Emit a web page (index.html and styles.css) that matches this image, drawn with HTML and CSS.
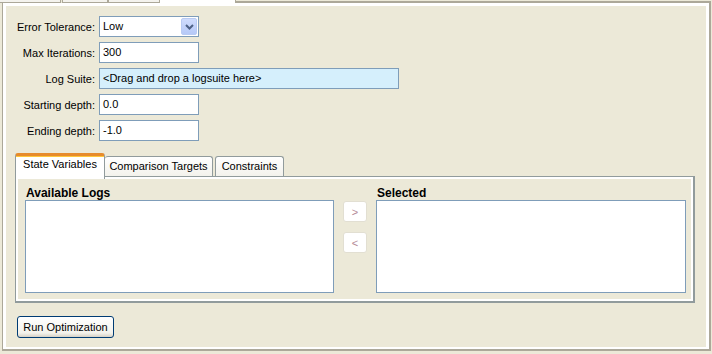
FILE: index.html
```html
<!DOCTYPE html>
<html lang="en">
<head>
    <meta charset="UTF-8">
    <meta name="viewport" content="width=device-width, initial-scale=1.0">
    <title>Optimization</title>
    <link rel="stylesheet" href="styles.css">
</head>
<body>
    <!-- clipped tabs of the outer tab strip -->
    <div class="strip">
        <span class="stub first"></span>
        <span class="stub second"></span>
        <span class="stub third"></span>
        <span class="stub current"></span>
        <span class="strip-rest"></span>
    </div>

    <div class="panel">
        <div class="form">
            <label>Error Tolerance:</label>
            <div class="combo">
                <span>Low</span>
                <span class="drop">
                    <svg width="9" height="6" viewBox="0 0 9 6"><path d="M1 1 L4.5 4.5 L8 1" fill="none" stroke="#4d6185" stroke-width="2"/></svg>
                </span>
            </div>

            <label>Max Iterations:</label>
            <div class="field">300</div>

            <label>Log Suite:</label>
            <div class="field drop-target">&lt;Drag and drop a logsuite here&gt;</div>

            <label>Starting depth:</label>
            <div class="field">0.0</div>

            <label>Ending depth:</label>
            <div class="field">-1.0</div>
        </div>

        <div class="tabs">
            <div class="tabbar">
                <span class="tab active">State Variables</span>
                <span class="tab targets">Comparison Targets</span>
                <span class="tab constraints">Constraints</span>
            </div>
            <div class="pane">
                <div class="col">
                    <div class="caption">Available Logs</div>
                    <div class="list"></div>
                </div>
                <div class="arrows">
                    <button class="move">&gt;</button>
                    <button class="move">&lt;</button>
                </div>
                <div class="col">
                    <div class="caption">Selected</div>
                    <div class="list"></div>
                </div>
            </div>
        </div>

        <button class="run">Run Optimization</button>
    </div>
</body>
</html>
```

FILE: styles.css
```css
body {
    margin: 0;
    height: 354px;
    overflow: hidden;
    background-color: #ece9d8;
    font-family: "Liberation Sans", Arial, sans-serif;
    font-size: 11px;
    color: #000;
}

/* outer tab strip, only its bottom is visible */
.strip {
    display: flex;
    height: 3px;
}

.stub {
    box-sizing: border-box;
    height: 3px;
    background: #f4f3ee;
    border-bottom: 1px solid #aca899;
}

.stub.first {
    width: 61px;
    border-right: 1px solid #aca899;
}

.stub.second {
    width: 46px;
    margin-left: 1px;
    border-left: 1px solid #aca899;
    border-right: 1px solid #aca899;
}

.stub.third {
    width: 52px;
    margin-left: 0;
    border-left: 1px solid #aca899;
    border-right: 1px solid #aca899;
}

.stub.current {
    width: 76px;
    background: #fff;
    border-bottom: none;
    border-right: 1px solid #aca899;
}

.strip-rest {
    flex: 1;
    margin-top: 1px;
    margin-right: 1px;
    background: #fff;
    border-top: 2px solid #aca899;
    border-right: 2px solid #aca899;
}

.panel {
    box-sizing: border-box;
    height: 348px;
    margin: 0 1px 0 2px;
    border-left: 1px solid #aca899;
    border-right: 2px solid #aca899;
    border-bottom: 2px solid #aca899;
    box-shadow: inset 3px 3px 0 #fff, inset -3px -2px 0 #fff;
    padding-top: 13px;
}

/* top form */
.form {
    display: grid;
    grid-template-columns: 92px auto;
    grid-auto-rows: 21px;
    column-gap: 4px;
    row-gap: 5px;
}

.form label {
    text-align: right;
    align-self: center;
}

.field, .combo {
    box-sizing: border-box;
    width: 100px;
    height: 21px;
    border: 1px solid #7f9db9;
    background: #fff;
    padding-left: 3px;
    line-height: 19px;
}

.field.drop-target {
    width: 300px;
    background: #d5effc;
}

.combo {
    display: flex;
    justify-content: space-between;
    padding-right: 1px;
    padding-top: 1px;
}

.combo span:first-child {
    line-height: 17px;
}

.drop {
    box-sizing: border-box;
    width: 16px;
    height: 17px;
    border-radius: 2px;
    background: linear-gradient(#cfdcfd, #b6c9f7);
    border: 1px solid #b9cbf3;
    display: flex;
    align-items: center;
    justify-content: center;
}

/* inner tabs */
.tabs {
    margin: 12px 14px 0 12px;
}

.tabbar {
    display: flex;
    align-items: flex-end;
    height: 23px;
}

.tab {
    box-sizing: border-box;
    height: 20px;
    border: 1px solid #919b9c;
    border-bottom: none;
    border-radius: 3px 3px 0 0;
    background: linear-gradient(#fff, #f3f2ec);
    text-align: center;
    line-height: 19px;
}

.tab.active {
    position: relative;
    z-index: 1;
    width: 90px;
    height: 26px;
    margin-bottom: -3px;
    background: #fff;
    border-top: 3px solid #e68b2c;
    box-shadow: inset 0 1px 0 #ffc73c;
    line-height: 17px;
    padding-bottom: 4px;
}

.tab.targets {
    width: 108px;
    border-left: none;
}

.tab.constraints {
    width: 69px;
    margin-left: 2px;
}

.pane {
    box-sizing: border-box;
    height: 127px;
    border-top: 1px solid #919b9c;
    border-left: 1px solid #919b9c;
    border-right: 2px solid #919b9c;
    border-bottom: 2px solid #919b9c;
    box-shadow: inset 2px 2px 0 #fff, inset -2px -2px 0 #fff;
    padding: 9px 7px 8px 9px;
    display: grid;
    grid-template-columns: 309px 42px 1fr;
}

.caption {
    font-size: 12px;
    font-weight: bold;
    line-height: 14px;
    padding-left: 1px;
}

.list {
    box-sizing: border-box;
    height: 93px;
    border: 1px solid #7f9db9;
    background: #fff;
}

.arrows {
    display: flex;
    flex-direction: column;
    gap: 10px;
    padding-top: 15px;
    padding-left: 9px;
}

.move {
    box-sizing: border-box;
    width: 24px;
    height: 21px;
    padding: 0;
    border: 1px solid #e2dfd2;
    border-radius: 3px;
    background: #fff;
    color: #b48a96;
    font-family: "Liberation Sans", Arial, sans-serif;
    font-size: 11px;
}

.run {
    display: block;
    box-sizing: border-box;
    width: 97px;
    height: 22px;
    margin: 13px 0 0 14px;
    padding: 0;
    border: 1px solid #003c74;
    border-radius: 3px;
    background: linear-gradient(#fff, #f3f2ec 80%, #d6d0c5);
    font-family: "Liberation Sans", Arial, sans-serif;
    font-size: 11px;
    color: #000;
}
```
